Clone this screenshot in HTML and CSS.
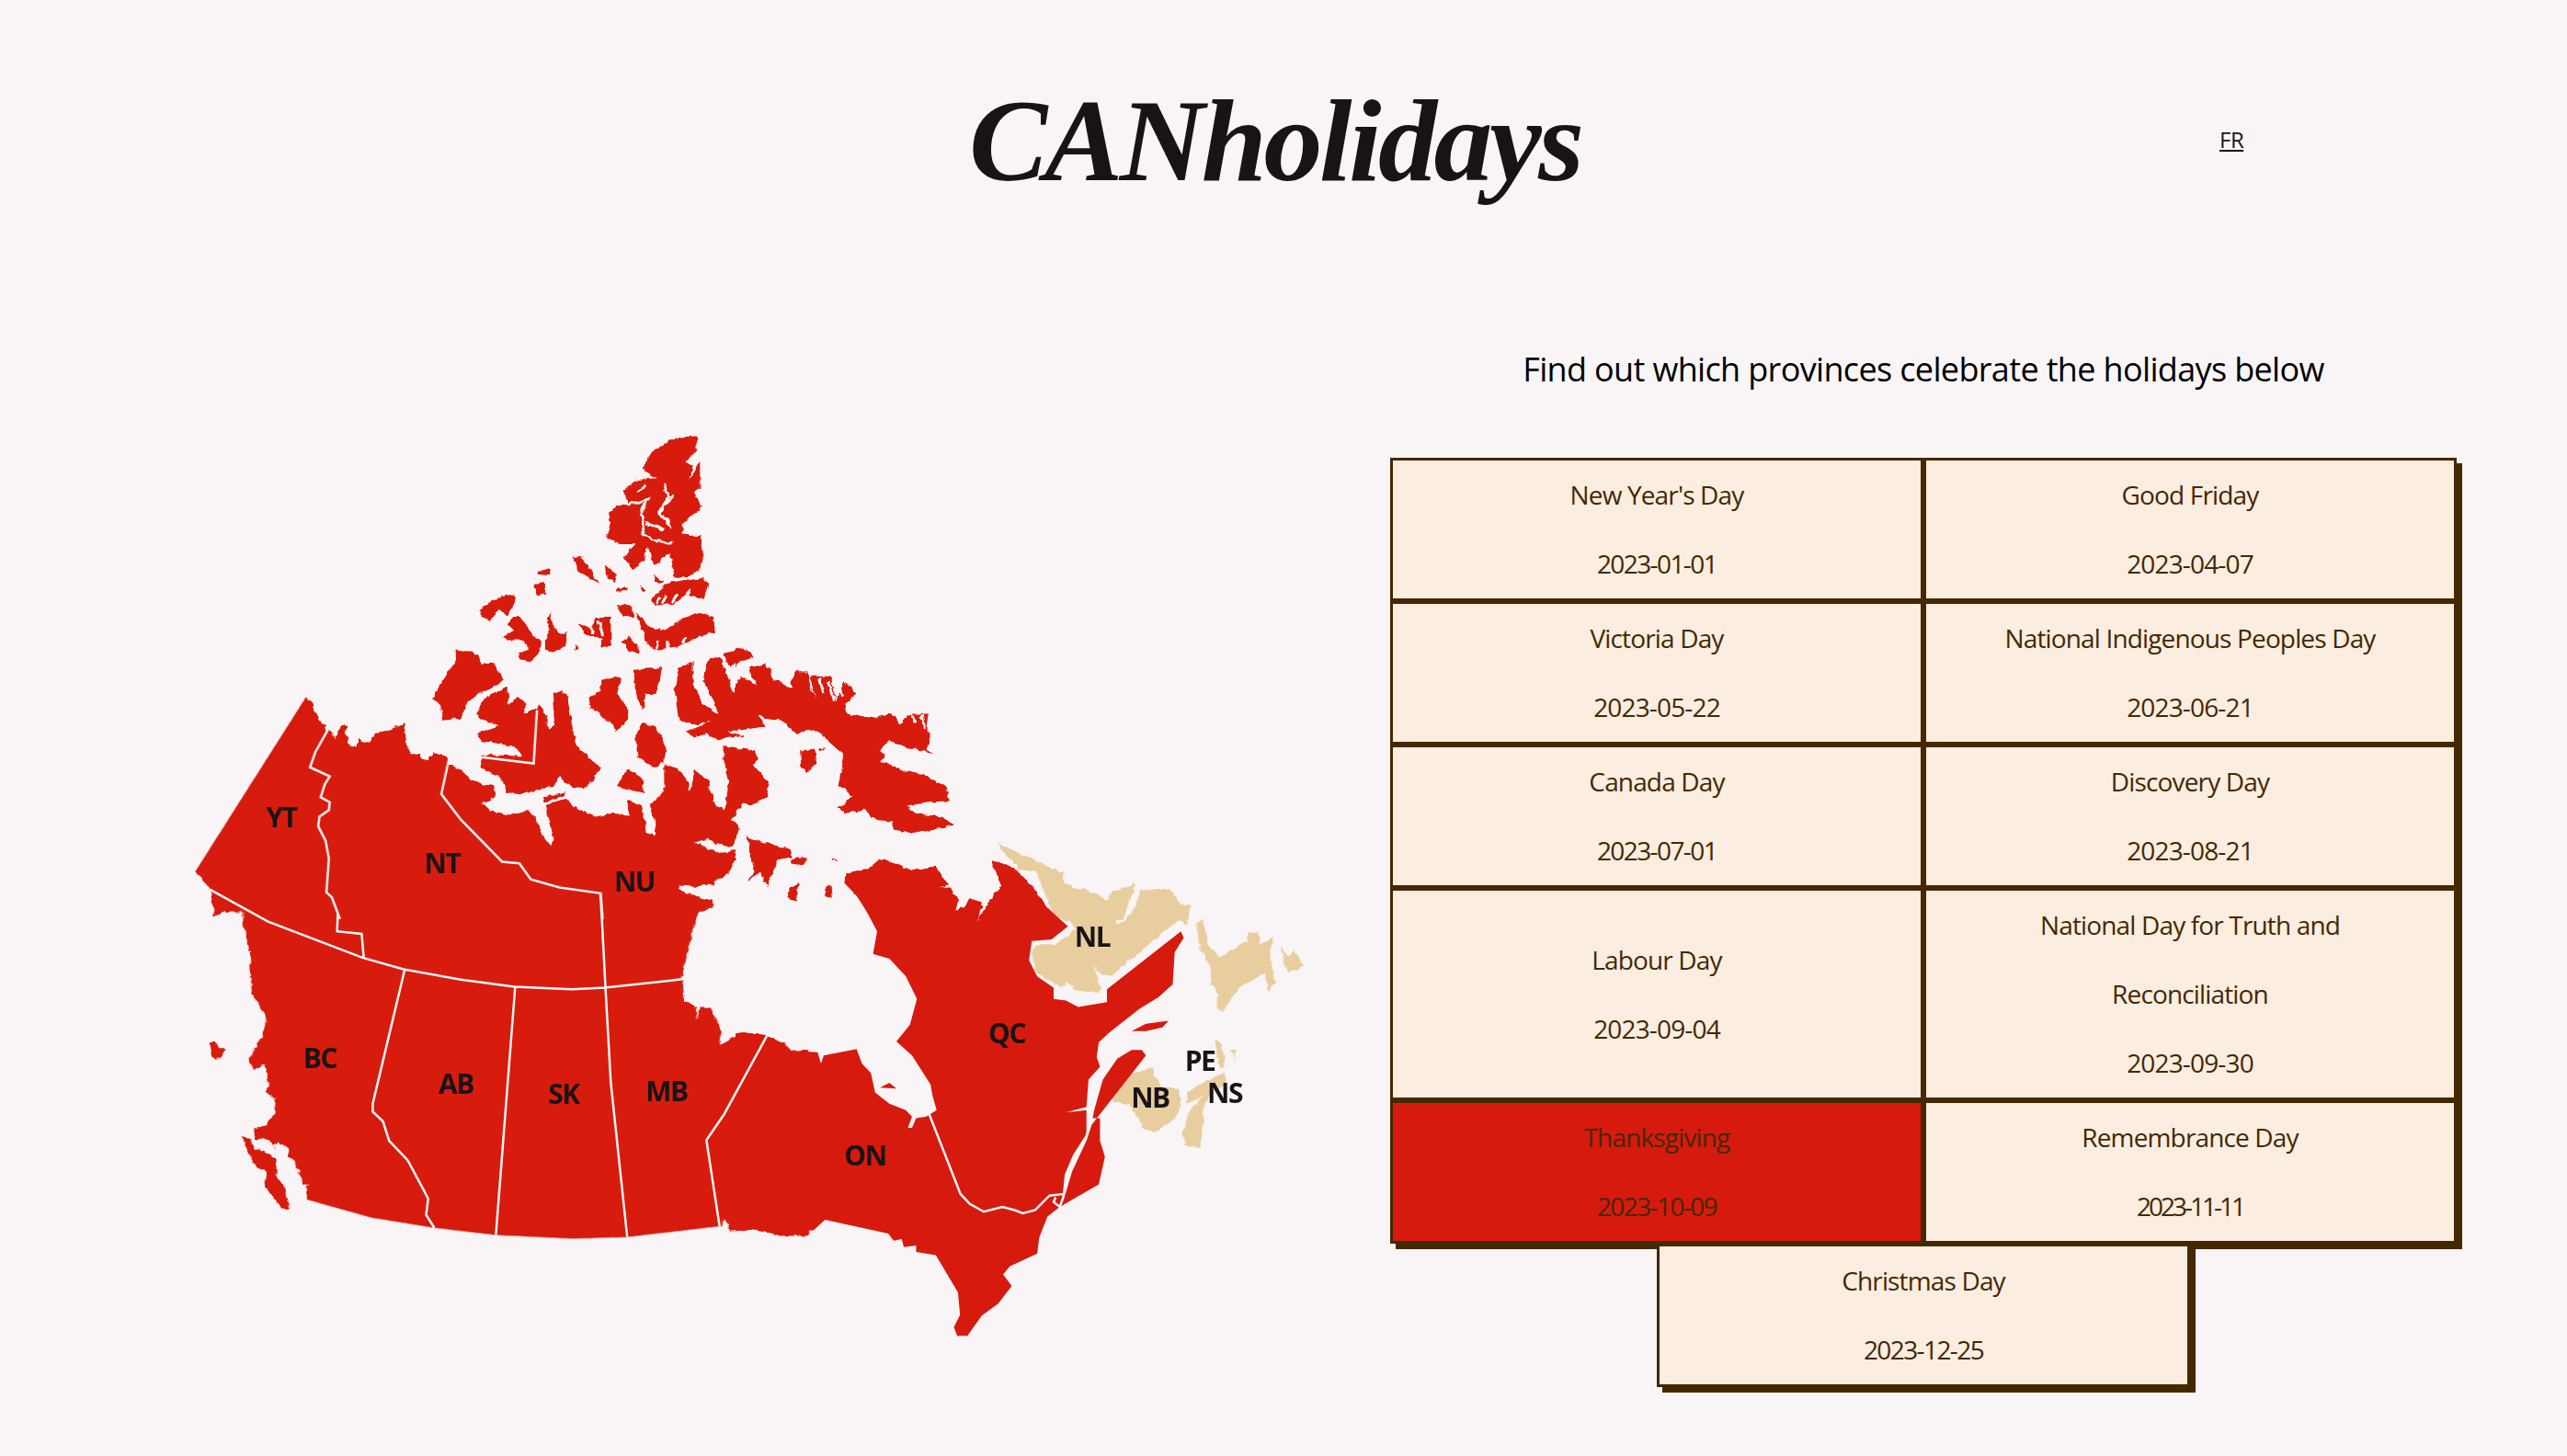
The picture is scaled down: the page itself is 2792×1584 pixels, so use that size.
FILE: index.html
```html
<!DOCTYPE html>
<html>
	<head>
		<meta charset="UTF-8">
		<title>CANholidays</title>
		<link rel="stylesheet" href="styles.css">
	</head>
	<body>
		<header class="top">
			<h1 class="logo">CANholidays</h1>
			<a class="lang" href="#">FR</a>
		</header>
		<main class="content">
			<svg class="map" width="1240" height="1010" viewBox="200 460 1240 1010">
				<defs>
					<filter id="rough" x="0" y="0" width="1" height="1" filterUnits="objectBoundingBox">
						<feTurbulence type="fractalNoise" baseFrequency="0.13" numOctaves="2" seed="4"/>
						<feDisplacementMap in="SourceGraphic" scale="6" xChannelSelector="R" yChannelSelector="G"/>
					</filter>
				</defs>
				<g filter="url(#rough)">
					<!-- north west -->
					<g transform="translate(180 450) scale(.4464 .3507)">
						<path class="land" d="M72,1422 L342,880 360,900 368,935 392,982 400,982 412,1008 420,985 432,965 448,968 438,985 445,1030 465,1030 470,1010 495,1020 510,995 540,985 580,962 584,990 588,1035 600,1060 618,1050 622,1068 640,1072 655,1050 680,1058 692,1090 720,1105 745,1135 775,1150 800,1155 805,1190 772,1210 790,1232 840,1245 885,1232 905,1265 925,1320 940,1345 945,1310 930,1250 925,1215 975,1195 990,1215 1045,1250 1090,1240 1130,1245 1165,1245 1175,1300 1190,1310 1195,1270 1180,1215 1215,1170 1215,1090 1260,1110 1280,1170 1290,1100 1320,1140 1340,1215 1362,1230 1372,1150 1358,1050 1360,1030 1435,1045 1445,1075 1430,1085 1470,1150 1465,1190 1430,1215 1405,1210 1380,1260 1400,1290 1385,1330 1375,1345 1360,1340 1320,1320 1285,1330 1340,1360 1392,1355 1378,1420 1345,1445 115,1445 108,1447 90,1440Z
						M705,735 L750,738 770,775 800,772 825,830 760,870 735,895 720,945 675,952 670,905 650,878 680,820 705,770Z
						M835,850 L835,900 858,880 880,900 875,930 915,905 930,950 935,980 950,965 945,870 965,860 980,880 995,1000 1000,1030 1050,1085 1060,1100 1040,1140 1020,1165 990,1160 960,1125 945,1155 920,1160 880,1178 830,1180 820,1135 770,1100 768,1060 820,1060 870,1062 860,1040 820,1025 770,1015 757,990 815,970 770,950 755,935 770,895 790,870Z
						M1095,815 L1110,820 1100,870 1125,910 1125,950 1100,985 1075,950 1030,905 1035,880 1060,860 1060,830Z
						M1140,795 L1208,788 1195,870 1170,870 1165,920 1150,885 1140,830Z
						M1160,955 L1195,975 1220,1035 1215,1080 1190,1100 1150,1065 1145,1000Z
						M1125,1100 L1160,1130 1168,1178 1140,1170 1100,1155Z
						M1125,1200 L1160,1215 1165,1250 1130,1250Z
						M920,1190 L975,1172 970,1185 925,1205Z
						M1295,70 L1260,72 1225,85 1185,120 1160,175 1195,200 1150,205 1115,240 1130,285 1095,285 1080,310 1085,345 1075,385 1110,405 1145,405 1115,445 1140,485 1165,455 1175,410 1190,470 1230,430 1240,510 1280,500 1302,485 1310,430 1305,380 1258,375 1262,340 1305,290 1290,240 1303,235 1302,145 1278,205 1285,160 1265,155 1296,110Z
						M1215,530 L1260,520 1310,510 1322,530 1310,575 1270,560 1240,590 1190,595 1185,575 1200,555Z
						M1145,610 L1175,655 1210,675 1270,630 1300,615 1335,630 1340,680 1300,690 1255,720 1190,735 1170,700Z
						M990,440 L1010,445 1030,470 1055,530 1030,510 1005,490 1000,460Z
						M1070,470 L1100,500 1095,525 1075,510Z
						M1098,540 L1125,540 1120,550 1098,552Z
						M1158,535 L1170,545 1165,555Z
						M1190,505 L1215,520 1205,530 1190,520Z
						M1100,590 L1135,595 1140,630 1115,630Z
						M910,490 L935,478 938,500 905,495Z
						M895,530 L925,525 925,560 905,565Z
						M765,610 L810,570 850,560 850,585 835,625 815,610 790,640 770,630Z
						M850,630 L865,630 885,670 905,700 915,705 915,735 885,770 860,765 860,745 885,730 865,700 830,700 820,695 850,675 835,650Z
						M937,615 L945,660 960,680 980,680 975,720 945,740 925,735 925,705 935,670 928,640Z
						M1050,630 L1085,630 1085,720 1060,730 1065,695 1030,690 1005,655 1040,660Z
						M1128,688 L1150,720 1152,745 1125,735 1112,710Z
						M1000,715 L1005,735 995,735Z
						M1250,790 L1285,770 1285,840 1310,900 1345,930 1330,955 1280,965 1250,950 1240,850Z
						M1320,765 L1350,752 1385,865 1400,815 1445,845 1440,790 1475,795 1480,825 1520,850 1535,800 1568,800 1568,960 1520,955 1490,945 1465,950 1440,925 1460,970 1370,985 1410,1000 1340,1010 1320,990 1290,1005 1270,985 1330,955 1345,925 1335,890 1310,830 1315,785Z
						M1360,745 L1400,728 1435,755 1395,765 1375,790Z
						M1415,1305 L1430,1320 1520,1350 1525,1375 1490,1385 1465,1470 1450,1420 1420,1455 1435,1420Z"/>
						<path class="cut" d="M1215,215 L1225,255 1205,310 1235,355 M1125,285 L1175,265 1160,300 1165,375 1195,395 1235,400 M1170,340 L1215,360 M1215,285 L1240,255 M1150,245 L1170,225 M1260,350 L1295,345
						M1210,590 L1220,565 M1235,585 L1250,560 M1265,570 L1280,548 M1195,590 L1205,570
						M1195,730 L1200,705 M1225,730 L1225,705 M1260,715 L1265,695
						M1030,655 L1045,680 M1055,640 L1065,690"/>
					</g>
					<!-- north east -->
					<g transform="translate(800 450) scale(.4464 .3507)">
						<path class="land" d="M0,727 L25,730 45,752 10,770 0,785Z
						M0,840 L55,848 30,790 75,775 80,825 105,830 140,860 145,800 165,800 195,880 180,815 230,815 245,890 265,830 295,870 265,900 270,930 320,945 380,930 400,960 420,935 470,930 465,970 475,1000 465,1040 482,1052 430,1040 410,1030 375,1015 355,1040 365,1060 350,1075 400,1105 470,1125 515,1160 520,1200 480,1205 420,1215 440,1240 500,1250 535,1275 480,1290 430,1300 385,1290 380,1265 345,1260 315,1230 265,1240 250,1225 285,1185 250,1155 265,1060 225,1015 200,985 170,985 150,995 125,965 100,945 60,925 52,945 70,970 0,985Z
						M157,1045 L190,1040 198,1085 175,1115 160,1095Z
						M200,1040 L220,1036 205,1050Z
						M135,1380 L175,1378 165,1402 135,1395Z
						M155,1455 L145,1510 125,1500 135,1465Z
						M220,1465 L232,1465 235,1505 220,1495Z
						M235,1375 L250,1385 240,1385Z
						M265,1440 L285,1420 320,1415 355,1378 430,1418 490,1402 510,1465 478,1478 522,1465 545,1510 535,1540 555,1535 570,1503 600,1530 590,1568 605,1540 620,1510 650,1465 622,1385 650,1395 690,1420 730,1480 780,1568 330,1568 300,1500Z"/>
						<path class="cut" d="M95,800 L110,835 M125,810 L135,850 M205,820 L215,870 M225,830 L240,890 M250,840 L262,880 M400,935 L405,960 M430,940 L440,955 M455,935 L460,975"/>
						<path class="nl" d="M635,1330 L660,1345 720,1380 780,1415 795,1440 778,1465 830,1470 880,1490 905,1510 930,1490 975,1455 945,1568 810,1568 730,1420 690,1415 660,1370Z
						M975,1568 L985,1480 1050,1472 1075,1520 1110,1525 1105,1568Z"/>
					</g>
					<!-- south west -->
					<g transform="translate(180 950) scale(.4464 .3507)">
						<path class="land" d="M80,0 L1375,0 1345,20 1335,35 1295,40 1252,35 1252,50 1300,75 1335,85 1335,100 1300,120 1285,170 1280,210 1270,260 1258,320 1265,395 1292,415 1296,455 1300,415 1325,415 1355,490 1348,530 1375,515 1410,495 1465,505 1510,530 1525,552 1568,550 1568,1125 1500,1125 1440,1105 1375,1108 1365,1070 1350,1095 1125,1128 990,1133 805,1122 655,1100 500,1068 345,1012 345,980 320,925 315,895 300,880 298,855 275,830 265,855 240,820 220,830 215,795 250,775 265,745 268,700 245,680 250,640 240,595 215,610 205,575 240,495 245,470 240,435 210,375 205,240 190,165 188,118 150,118 120,135 108,50Z
						M185,815 L205,825 215,850 270,885 270,940 290,970 303,1040 285,1040 260,1000 240,970 245,930 215,900 195,850Z
						M107,525 L125,525 130,545 145,545 125,585 110,565Z"/>
						<path class="cut" d="M240,600 L215,640 M250,660 L210,680 M265,710 L220,735 M255,745 L225,770 M270,840 L250,860 M300,860 L270,880 M325,920 L295,945 M345,965 L310,985"/>
					</g>
					<!-- south east, the atlantic side -->
					<g transform="translate(800 950) scale(.4464 .3507)">
						<path class="nl" d="M735,0 L800,0 795,25 840,55 885,85 905,90 915,60 975,30 965,70 950,110 925,155 950,150 975,100 985,60 1015,50 1020,85 1040,45 1060,50 1085,100 1108,105 1100,165 1082,142 915,318 890,315 875,290 885,340 895,355 880,370 830,368 808,335 800,355 760,330 730,305 722,250 735,220 775,220 815,190 830,170 770,120Z
						M1120,150 L1140,145 1150,220 1180,260 1205,240 1245,210 1250,185 1272,180 1280,220 1310,200 1300,250 1315,340 1300,365 1290,310 1230,350 1195,415 1185,432 1172,420 1175,370 1158,340 1160,295 1135,240Z
						M1330,225 L1345,260 1360,235 1383,285 1350,310 1340,290Z
						M905,680 L950,625 1000,610 1015,600 1025,640 1040,660 1080,670 1085,720 1065,770 1020,805 995,790 960,720 920,708Z
						M1100,680 L1145,645 1190,620 1195,655 1155,690 1140,720 1140,780 1130,850 1095,845 1090,810 1105,735 1140,690 1100,715Z
						M1170,515 L1185,530 1195,600 1180,605 1170,560Z
						M1208,545 L1218,545 1215,585Z"/>
					</g>
				</g>
				<!-- straight edges stay clean -->
				<g transform="translate(180 450) scale(.4464 .3507)">
					<path class="sea" d="M72,1422 L342,880 320,860 30,1400Z"/>
					<path class="land" d="M72,1422 L342,880 350,960 100,1420Z"/>
				</g>
				<g transform="translate(180 950) scale(.4464 .3507)">
					<path class="sea" d="M345,1012 L500,1068 655,1100 805,1122 990,1133 1125,1128 1350,1095 1350,1160 345,1160Z"/>
					<path class="land" d="M345,1012 L500,1068 655,1100 805,1122 990,1133 1125,1128 1350,1095 1350,1060 1125,1090 990,1100 805,1090 655,1070 500,1035 345,985Z"/>
				</g>
				<g transform="translate(800 950) scale(.4464 .3507)">
					<path class="land" d="M0,497 L20,493 75,505 110,525 128,550 200,555 208,590 215,565 295,545 308,590 330,620 340,680 375,715 415,735 430,755 420,790 430,790 440,760 465,755 490,735 480,690 475,655 430,565 392,522 425,470 442,390 415,320 375,265 335,250 345,180 320,120 295,70 265,30 270,0 495,0 520,35 478,50 525,45 535,115 555,115 570,78 600,90 590,150 610,110 620,110 630,60 650,50 640,0 690,0 745,90 810,165 770,205 722,210 715,270 735,320 775,355 775,390 805,395 835,415 905,400 905,360 1085,180 1092,200 1070,245 1065,345 1030,385 985,420 910,495 885,525 880,570 888,600 860,640 855,725 805,742 855,735 855,815 825,875 805,935 800,985 790,1035 760,1065 740,1130 735,1180 668,1220 652,1245 673,1280 640,1335 600,1372 565,1435 540,1435 532,1408 547,1370 542,1300 488,1185 440,1175 440,1155 410,1160 405,1135 385,1140 372,1118 218,1075 190,1108 125,1110 110,1125 70,1108 40,1105 20,1110 0,1108Z
					M1000,565 L990,548 965,548 930,575 895,640 875,730 870,760 888,760 888,830 900,880 885,965 790,1035 805,990 820,925 855,830 868,780Z
					M965,490 L1000,467 1055,458 1040,478 1000,490Z
					M352,665 L375,650 392,668Z"/>
					<path class="cut" d="M362,405 L365,445"/>
				</g>
				<!-- borders between the provinces -->
				<g transform="translate(180 450) scale(.4464 .3507)">
					<path class="border" d="M395,982 L365,1050 352,1097 400,1125 388,1150 378,1190 400,1205 398,1230 375,1250 372,1280 390,1325 398,1380 392,1485 405,1500 425,1568
					M690,1075 L672,1180 720,1260 820,1390 862,1395 890,1445 960,1470 1060,1488 1065,1568
					M918,705 L918,745 M838,840 L770,870 M905,920 L897,1085 765,1065"/>
				</g>
				<g transform="translate(180 950) scale(.4464 .3507)">
					<path class="border" d="M420,125 L418,180 478,188 483,262
					M108,50 L250,150 480,262 580,298 720,330 850,352 990,360 1070,355 1265,328
					M583,298 L505,715 505,740 530,770 545,830 575,870 590,890 630,985 640,1010 635,1060 655,1100
					M852,352 L805,1122 M1060,62 L1072,355 1085,650 1125,1128
					M1465,505 L1360,750 1318,828 1350,1095"/>
				</g>
				<g transform="translate(800 950) scale(.4464 .3507)">
					<path class="border" d="M465,725 L548,995 570,1025 605,1050 650,1035 680,1045 700,1055 730,1045 765,1000 800,995 805,935 825,875 855,815 868,760
					M780,1005 L775,1020 790,1035 800,1000"/>
				</g>
				<g class="labels">
					<text x="306" y="900">YT</text>
					<text x="481" y="950">NT</text>
					<text x="690" y="970">NU</text>
					<text x="348" y="1162">BC</text>
					<text x="496" y="1190">AB</text>
					<text x="613" y="1201">SK</text>
					<text x="725" y="1198">MB</text>
					<text x="941" y="1268">ON</text>
					<text x="1095" y="1135">QC</text>
					<text x="1188" y="1030">NL</text>
					<text x="1251" y="1205">NB</text>
					<text x="1305" y="1165">PE</text>
					<text x="1332" y="1200">NS</text>
				</g>
			</svg>
			<section class="holidays">
				<h2 class="intro">Find out which provinces celebrate the holidays below</h2>
				<div class="cards">
					<div class="card"><p>New Year's Day</p><p class="tight">2023-01-01</p></div>
					<div class="card"><p>Good Friday</p><p>2023-04-07</p></div>
					<div class="card"><p>Victoria Day</p><p>2023-05-22</p></div>
					<div class="card"><p>National Indigenous Peoples Day</p><p>2023-06-21</p></div>
					<div class="card"><p>Canada Day</p><p class="tight">2023-07-01</p></div>
					<div class="card"><p>Discovery Day</p><p>2023-08-21</p></div>
					<div class="card"><p>Labour Day</p><p>2023-09-04</p></div>
					<div class="card"><p>National Day for Truth and Reconciliation</p><p>2023-09-30</p></div>
					<div class="card next"><p>Thanksgiving</p><p class="tight">2023-10-09</p></div>
					<div class="card"><p>Remembrance Day</p><p class="tighter">2023-11-11</p></div>
					<div class="card"><p>Christmas Day</p><p class="tight">2023-12-25</p></div>
				</div>
			</section>
		</main>
	</body>
</html>
```

FILE: styles.css
```css
*{
	margin: 0;
	padding: 0;
	box-sizing: border-box;
}
body{
	background: #f9f5f6;
	color: #181416;
	font-family: "Open Sans", "Noto Sans", sans-serif;
}
.top{
	height: 306px;
	display: flex;
	align-items: center;
	padding-left: 1054px;
}
.logo{
	width: 662px;
	font-family: "Liberation Serif", cursive;
	font-style: italic;
	font-weight: 700;
	font-size: 128px;
	letter-spacing: -3.5px;
	white-space: nowrap;
}
.lang{
	margin-left: 698px;
	margin-bottom: 3px;
	font-size: 24px;
	letter-spacing: -0.5px;
	color: #181416;
}
.content{
	margin-top: 72px;
	padding-left: 200px;
	padding-bottom: 40px;
	display: flex;
	align-items: flex-start;
	gap: 72px;
}
.map{
	margin-top: 82px;
	flex: none;
}
.land{
	fill: #d71a0e;
}
.nl{
	fill: #e8cd9f;
}
.sea{
	fill: #f9f5f6;
}
.cut,
.border{
	fill: none;
	stroke: #f9f5f6;
	vector-effect: non-scaling-stroke;
}
.cut{
	stroke-width: 3;
}
.border{
	stroke-width: 2.5;
}
.labels text{
	font-size: 30px;
	font-weight: 700;
	letter-spacing: -1.5px;
	text-anchor: middle;
	fill: #181416;
}
.holidays{
	width: 1160px;
}
.intro{
	font-size: 36px;
	font-weight: 400;
	letter-spacing: -0.65px;
	line-height: 48px;
	text-align: center;
	margin-bottom: 72px;
	color: #000;
}
.cards{
	display: flex;
	flex-wrap: wrap;
	justify-content: center;
}
.card{
	width: 580px;
	padding: 0 60px;
	border: 3px solid #442800;
	box-shadow: 6px 6px 0 #442800;
	background: #fbede0;
	color: #442800;
	font-size: 28px;
	letter-spacing: -0.85px;
	line-height: 75px;
	text-align: center;
	display: flex;
	flex-direction: column;
	justify-content: center;
}
.tight{
	letter-spacing: -1.6px;
}
.tighter{
	letter-spacing: -3px;
}
.next{
	background: #d71a0e;
}
```
